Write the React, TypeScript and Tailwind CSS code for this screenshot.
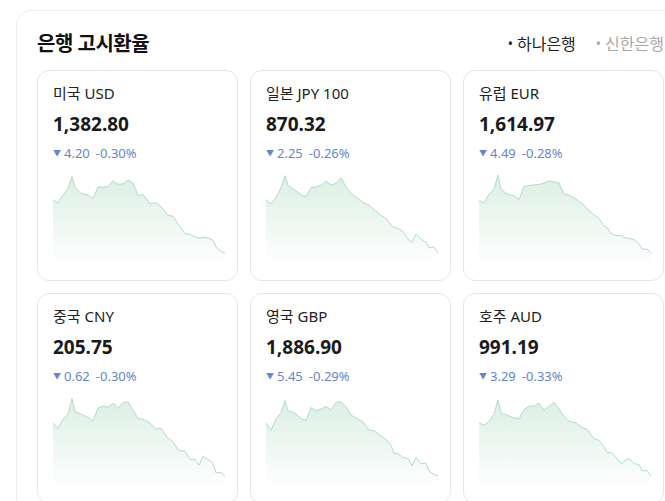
import React from 'react';

type Rate = {
  label: string;
  value: string;
  diff: string;
  pct: string;
  seed: number;
};

const RATES: Rate[] = [
  { label: '미국 USD', value: '1,382.80', diff: '4.20', pct: '-0.30%', seed: 3 },
  { label: '일본 JPY 100', value: '870.32', diff: '2.25', pct: '-0.26%', seed: 7 },
  { label: '유럽 EUR', value: '1,614.97', diff: '4.49', pct: '-0.28%', seed: 11 },
  { label: '중국 CNY', value: '205.75', diff: '0.62', pct: '-0.30%', seed: 5 },
  { label: '영국 GBP', value: '1,886.90', diff: '5.45', pct: '-0.29%', seed: 13 },
  { label: '호주 AUD', value: '991.19', diff: '3.29', pct: '-0.33%', seed: 17 },
];

// rough shape of the day's movement, x 0..172 / y 0..90
const BASE: [number, number][] = [
  [0, 26], [5, 31], [10, 22], [15, 16], [19, 2], [22, 14], [28, 18], [35, 21], [40, 23],
  [45, 13], [50, 11], [55, 12], [60, 9], [65, 12], [70, 7], [75, 5], [80, 11], [85, 19],
  [90, 22], [97, 27], [103, 31], [108, 34], [115, 39], [120, 45], [125, 51], [128, 55],
  [132, 57], [137, 60], [142, 64], [146, 66], [150, 62], [155, 64], [160, 67], [163, 73],
  [168, 75], [172, 79],
];

function noise(seed: number, i: number) {
  const v = Math.sin(seed * 97.13 + i * 12.9898) * 43758.5453;
  return v - Math.floor(v);
}

function Sparkline({ seed }: { seed: number }) {
  const pts = BASE.map(([x, y], i) => {
    const j = i === 0 || i === BASE.length - 1 ? 0 : (noise(seed, i) - 0.5) * 6;
    return [x, Math.max(1, y + j)] as [number, number];
  });
  const line = pts.map(([x, y], i) => `${i ? 'L' : 'M'}${x} ${y.toFixed(1)}`).join(' ');
  const area = `${line} L172 92 L0 92 Z`;
  const id = `g${seed}`;
  return (
    <svg width="172" height="92" viewBox="0 0 172 92" className="block">
      <defs>
        <linearGradient id={id} x1="0" y1="0" x2="0" y2="1">
          <stop offset="0%" stopColor="#dcefe4" stopOpacity="1" />
          <stop offset="100%" stopColor="#ffffff" stopOpacity="1" />
        </linearGradient>
      </defs>
      <path d={area} fill={`url(#${id})`} />
      <path d={line} fill="none" stroke="#b3dbc6" strokeWidth="1" strokeLinejoin="round" />
    </svg>
  );
}

export default function App() {
  return (
    <div
      className="w-[665px] h-[501px] overflow-hidden bg-white pl-4 pt-2.5"
      style={{ fontFamily: '"Noto Sans", "Noto Sans CJK KR", sans-serif' }}
    >
      <div className="w-[669px] rounded-2xl border border-[#ececec] bg-white px-[20px] pt-[20px] pb-6">
        {/* Header */}
        <div className="flex items-center justify-between h-[26px] mb-[13px]">
          <h1 className="text-[20px] font-bold text-[#111] tracking-tight">은행 고시환율</h1>
          <div className="flex items-center gap-[20px] text-[16px] leading-5">
            <span className="flex items-center gap-[4px] text-[#222]">
              <span className="text-[14px]">•</span>하나은행
            </span>
            <span className="flex items-center gap-[4px] text-[#a8a8a8]">
              <span className="text-[14px]">•</span>신한은행
            </span>
          </div>
        </div>

        {/* Cards */}
        <div className="grid grid-cols-[201px_201px_201px] gap-x-[12px] gap-y-[12px]">
          {RATES.map((r) => (
            <div
              key={r.label}
              className="h-[211px] rounded-xl border border-[#e6e6e6] bg-white px-[15px] pt-[12px]"
            >
              <div className="text-[15px] text-[#222] leading-5">{r.label}</div>
              <div className="mt-[9px] text-[19px] font-bold text-[#1a1a1a] leading-6">{r.value}</div>
              <div className="mt-[9px] flex items-center gap-[3px] text-[13px] text-[#6487c9] leading-4">
                <span className="text-[8px]">▼</span>
                <span>{r.diff}</span>
                <span className="ml-[3px]">{r.pct}</span>
              </div>
              <div className="mt-[13px]">
                <Sparkline seed={r.seed} />
              </div>
            </div>
          ))}
        </div>
      </div>
    </div>
  );
}
